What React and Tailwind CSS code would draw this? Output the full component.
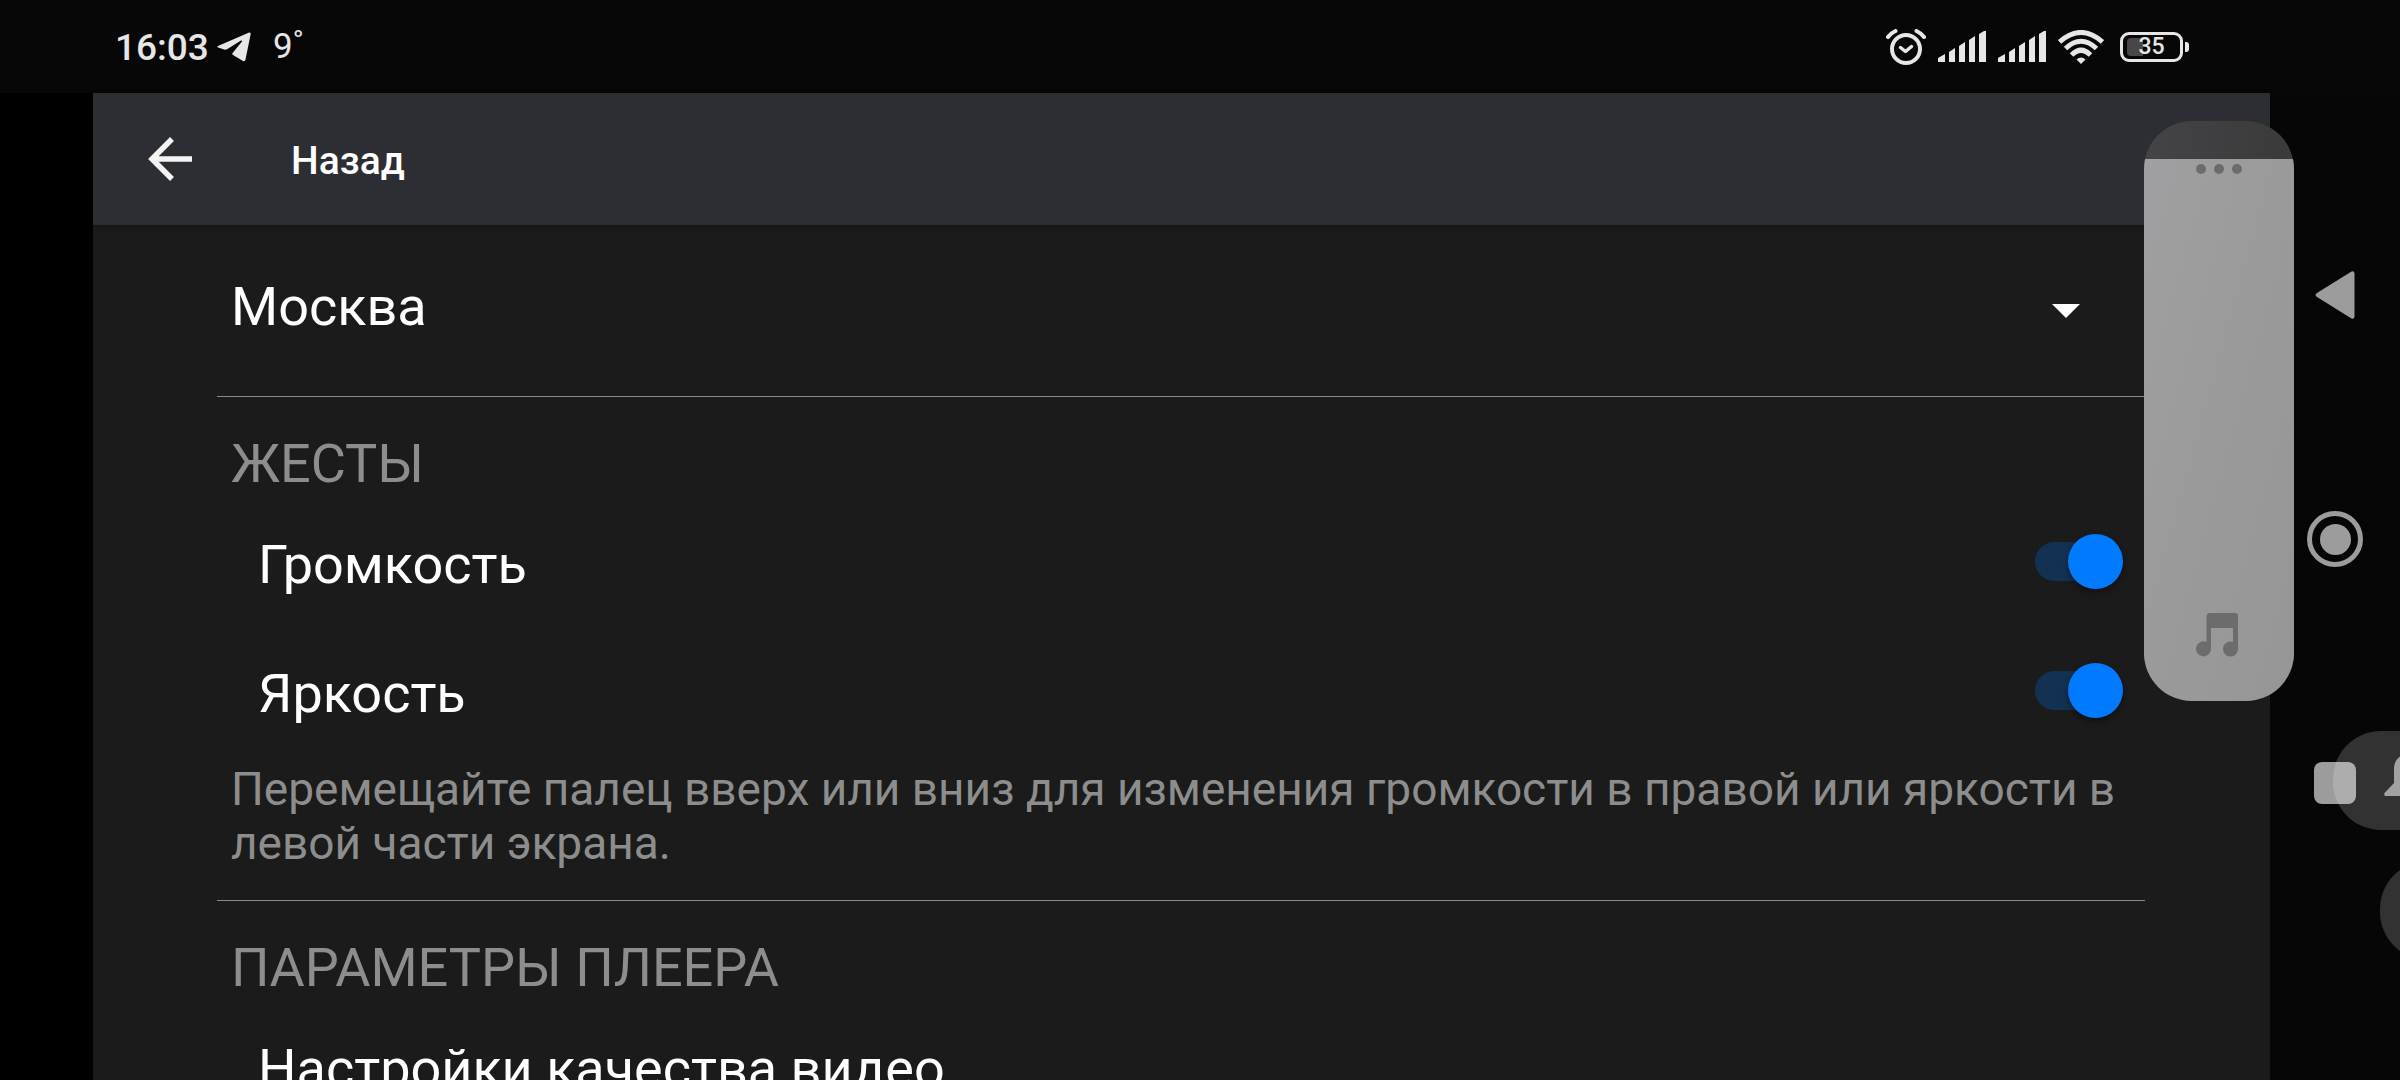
import React, { useState } from 'react';

const CITIES = ['Москва', 'Санкт-Петербург', 'Казань'];

const SIGNAL_BARS = [
  'M0 31v-4l7-4v8z',
  'M11 31V21l6-4v14z',
  'M21 31V15l6-4v20z',
  'M31 31V9l6-4v26z',
  'M41 31V3l5-3h2v31z',
];

const MAX_VOLUME = 580;

function TelegramIcon() {
  return (
    <svg className="h-[30px] w-[34px]" viewBox="0 0 34 30" fill="currentColor" aria-hidden="true">
      <path d="M1 14 31.500.8Q34 0 33.600 2.500L28.500 27.500Q28 30 26 29L16 23Q14.500 22 16 20.500L25 9.500Q25.500 8 24 8.600L10 17.300Q8.500 18 7 17.600L1.200 15.600Q-.5 15 1 14z" />
    </svg>
  );
}

function AlarmIcon() {
  return (
    <svg className="h-9 w-10" viewBox="0 0 40 36" fill="none" stroke="currentColor" strokeLinecap="round" strokeLinejoin="round" aria-hidden="true">
      <circle cx="20" cy="20" r="14" strokeWidth="4" />
      <path d="M14.500 18.500 19.500 22.500 25.500 17.500" strokeWidth="3.500" />
      <path d="M2 8Q5 4 9.500 2M38 8Q35 4 30.500 2" strokeWidth="4" />
    </svg>
  );
}

function SignalIcon() {
  return (
    <svg className="h-[31px] w-12" viewBox="0 0 48 31" fill="currentColor" aria-hidden="true">
      {SIGNAL_BARS.map((d) => (
        <path key={d} d={d} />
      ))}
    </svg>
  );
}

function WifiIcon() {
  return (
    <svg className="h-[34px] w-[46px]" viewBox="0 0 46 34" fill="none" stroke="currentColor" strokeWidth="5" aria-hidden="true">
      <path d="M1.500 12Q23-7 44.500 12" />
      <path d="M7.500 18.500Q23 4 38.500 18.500" />
      <path d="M13.500 25Q23 15.500 32.500 25" />
      <path d="M18.500 29.500Q23 25.500 27.500 29.500L23 34z" fill="currentColor" stroke="none" />
    </svg>
  );
}

function Battery({ level }) {
  return (
    <div className="ml-1 flex items-center gap-[2px]">
      <div className="relative flex h-[30px] w-[63px] items-center justify-center rounded-[9px] border-[3px] border-[#e6e6e6]">
        <span className="absolute inset-y-[3px] left-1 w-4 rounded-l-[4px] bg-[#474747]" />
        <span className="relative text-[23px] leading-6 font-medium">{level}</span>
      </div>
      <span className="h-[10px] w-1 rounded-r-[3px] bg-[#e6e6e6]" />
    </div>
  );
}

function StatusBar() {
  return (
    <div className="flex h-[93px] flex-shrink-0 items-center justify-between bg-[#070707] pr-[211px] pl-[115px] text-[#e6e6e6]">
      <div className="flex items-center">
        <span className="pt-[3px] text-[37px] leading-[44px] font-medium">16:03</span>
        <span className="ml-2">
          <TelegramIcon />
        </span>
        <span className="ml-[22px] text-[35px] leading-[44px]">9˚</span>
      </div>
      <div className="flex items-center gap-3">
        <AlarmIcon />
        <SignalIcon />
        <SignalIcon />
        <WifiIcon />
        <Battery level={35} />
      </div>
    </div>
  );
}

function Switch({ checked, onChange }) {
  return (
    <input
      type="checkbox"
      role="switch"
      checked={checked}
      onChange={(e) => onChange(e.target.checked)}
      className="relative mb-[6px] h-[39px] w-[88px] appearance-none rounded-full bg-[#4a4a4a] before:absolute before:-top-2 before:left-0 before:size-[55px] before:rounded-full before:bg-[#b0b0b0] before:shadow-[0_3px_6px_rgba(0,0,0,0.45)] checked:bg-[#133253] checked:before:left-[33px] checked:before:bg-[#007aff]"
    />
  );
}

function SwitchRow({ label, checked, onChange }) {
  return (
    <label className="flex h-[129px] items-center justify-between pr-[22px] pl-[41px] text-[54px] leading-[64px]">
      {label}
      <Switch checked={checked} onChange={onChange} />
    </label>
  );
}

function SectionTitle({ children }) {
  return <h2 className="mb-1 pt-[35px] pl-[14px] text-[54px] leading-[64px] text-[#8d8d8d]">{children}</h2>;
}

function Settings() {
  const [city, setCity] = useState(CITIES[0]);
  const [volume, setVolume] = useState(true);
  const [brightness, setBrightness] = useState(true);

  return (
    <div className="min-h-0 flex-1 overflow-hidden pr-[125px] pl-[124px]">
      <div className="relative border-b border-[#8a8a8a] pt-[50px] pb-[57px]">
        <select
          aria-label="Город"
          value={city}
          onChange={(e) => setCity(e.target.value)}
          className="block h-16 w-full appearance-none bg-transparent pl-[14px] text-[54px] leading-[64px] text-white"
        >
          {CITIES.map((name) => (
            <option key={name}>{name}</option>
          ))}
        </select>
        <svg className="pointer-events-none absolute top-[79px] right-[65px] h-[14px] w-7" viewBox="0 0 28 14" fill="#fff" aria-hidden="true">
          <path d="M0 0h28L14 14z" />
        </svg>
      </div>

      <section className="border-b border-[#8a8a8a] pb-[30px]">
        <SectionTitle>ЖЕСТЫ</SectionTitle>
        <SwitchRow label="Громкость" checked={volume} onChange={setVolume} />
        <SwitchRow label="Яркость" checked={brightness} onChange={setBrightness} />
        <p className="mt-1 px-[14px] text-[46px] leading-[54px] text-[#8d8d8d]">
          Перемещайте палец вверх или вниз для изменения громкости в правой или яркости в левой части экрана.
        </p>
      </section>

      <section>
        <SectionTitle>ПАРАМЕТРЫ ПЛЕЕРА</SectionTitle>
        <button type="button" className="flex h-[129px] w-full items-center pl-[41px] text-left text-[54px] leading-[64px]">
          Настройки качества видео
        </button>
      </section>
    </div>
  );
}

function SystemNav() {
  return (
    <nav className="flex w-[130px] flex-shrink-0 flex-col items-center gap-[188px] bg-[#060606] pt-[174px] text-[#9c9c9c]">
      <button type="button" aria-label="Назад" className="size-14">
        <svg className="size-14" viewBox="0 0 56 56" fill="currentColor">
          <path d="M10 26 44.500 4.500Q47 3.500 47.500 6.500V49.500Q47 52.500 44.500 51.500L10 30Q7 28 10 26z" />
        </svg>
      </button>
      <button type="button" aria-label="Домой" className="flex size-14 items-center justify-center rounded-full border-[5px] border-[#9c9c9c]">
        <span className="size-[31px] rounded-full bg-[#9c9c9c]" />
      </button>
      <button type="button" aria-label="Недавние" className="flex size-14 items-center justify-center">
        <span className="size-[42px] rounded-lg bg-[#9c9c9c]" />
      </button>
    </nav>
  );
}

function VolumePanel() {
  const [level, setLevel] = useState(542);

  return (
    <div className="absolute top-[121px] right-[106px] flex h-[580px] w-[150px] flex-col justify-end overflow-hidden rounded-[48px] bg-linear-to-r from-[#444347] to-[#3a3a3a]">
      <div
        className="bg-linear-to-br from-[#a0a0a2] via-[#9a9a9a] to-[#969696]"
        style={{ height: `${(level / MAX_VOLUME) * 100}%` }}
      />
      <input
        type="range"
        aria-label="Громкость мультимедиа"
        max={MAX_VOLUME}
        value={level}
        onChange={(e) => setLevel(Number(e.target.value))}
        className="absolute inset-0 h-full w-full opacity-0 [direction:rtl] [writing-mode:vertical-lr]"
      />
      <button type="button" aria-label="Ещё" className="absolute inset-x-0 top-[43px] flex justify-center gap-2">
        <span className="size-[10px] rounded-full bg-[#6c6c6c]" />
        <span className="size-[10px] rounded-full bg-[#6c6c6c]" />
        <span className="size-[10px] rounded-full bg-[#6c6c6c]" />
      </button>
      <svg className="absolute bottom-11 left-[52px] h-11 w-[42px]" viewBox="0 0 42 44" fill="#6c6c6c" aria-hidden="true">
        <path d="M14 0h25q3 0 3 3v33a7.500 7.500 0 1 1-5-7V15H15v21a7.500 7.500 0 1 1-4.500-7V3q0-3 3.500-3z" />
      </svg>
    </div>
  );
}

function SoundShortcuts() {
  return (
    <div className="absolute top-[731px] left-full -ml-[67px] flex w-[150px] flex-col gap-[31px]">
      <button type="button" aria-label="Без звука" className="flex h-[99px] w-[150px] items-center justify-center rounded-[48px] bg-white/18 pb-3">
        <svg className="h-[42px] w-12" viewBox="0 0 48 42" fill="#a2a2a2">
          <path d="M24 0C16 0 10 6 10 15v14L.500 39Q-.5 42 2 42h44q2.500 0 1.500-3L38 29V15C38 6 32 0 24 0z" />
        </svg>
      </button>
      <button type="button" aria-label="Не беспокоить" className="ml-[47px] h-[99px] w-[103px] rounded-[48px] bg-white/18" />
    </div>
  );
}

export default function App() {
  return (
    <div className="relative flex h-screen flex-col overflow-hidden bg-black font-['Roboto',sans-serif] text-white">
      <StatusBar />
      <div className="flex min-h-0 flex-1 pl-[93px]">
        <main className="flex min-w-0 flex-1 flex-col bg-[#1b1b1b]">
          <header className="flex h-[132px] flex-shrink-0 items-center bg-[#2d2e33] pl-[55px] shadow-[0_2px_6px_rgba(0,0,0,0.2)]">
            <button type="button" aria-label="Вернуться" className="size-11">
              <svg className="size-11" viewBox="0 0 44 44" fill="none" stroke="#f4f4f4" strokeWidth="5.500" aria-hidden="true">
                <path d="M44 22H5M24 2 4 22l20 20" />
              </svg>
            </button>
            <h1 className="ml-[99px] pt-1 text-[39px] leading-[44px] font-medium">Назад</h1>
          </header>
          <Settings />
        </main>
        <SystemNav />
      </div>
      <VolumePanel />
      <SoundShortcuts />
    </div>
  );
}
